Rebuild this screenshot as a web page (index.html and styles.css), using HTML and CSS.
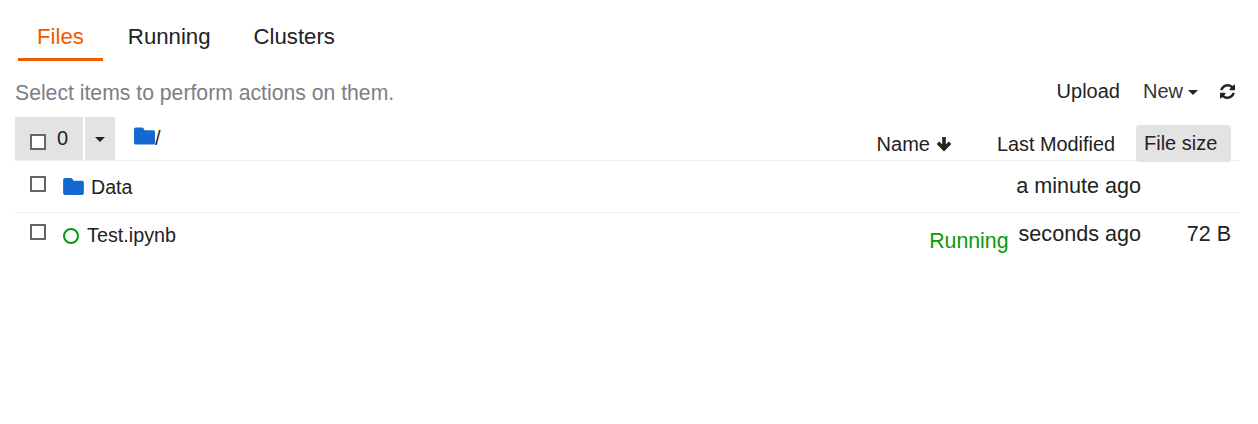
FILE: index.html
```html
<!DOCTYPE html>
<html lang="en">
<head>
<meta charset="utf-8">
<title>Files</title>
<link rel="stylesheet" href="styles.css">
</head>
<body>
<nav class="tabs">
  <a class="tab active">Files</a>
  <a class="tab">Running</a>
  <a class="tab">Clusters</a>
</nav>
<div class="toolbar">
  <span class="hint">Select items to perform actions on them.</span>
  <div class="actions">
    <span class="upload">Upload</span>
    <span class="new">New<i class="caret"></i></span>
    <svg class="refresh" viewBox="0 0 1536 1536" width="15" height="15"><path fill="#222" d="M1511 928q0 5-1 7-64 268-268 434.5T764 1536q-146 0-282.500-55T238 1324l-129 129q-19 19-45 19t-45-19-19-45V960q0-26 19-45t45-19h448q26 0 45 19t19 45-19 45l-137 137q71 66 161 102t187 36q134 0 250-65t186-179q11-17 53-117 8-23 30-23h192q13 0 22.500 9.500t9.500 22.500zm25-800v448q0 26-19 45t-45 19h-448q-26 0-45-19t-19-45 19-45l138-138Q969 256 768 256q-134 0-250 65T332 500q-11 17-53 117-8 23-30 23H50q-13 0-22.500-9.500T18 608v-7q65-268 270-434.500T768 0q146 0 284 55.500T1297 212l130-129q19-19 45-19t45 19 19 45z"/></svg>
  </div>
</div>
<div class="list">
  <div class="head">
    <div class="select-btn"><span class="box"></span><span class="count">0</span></div>
    <div class="drop-btn"><i class="caret"></i></div>
    <div class="crumb">
      <svg class="folder crumb-folder" viewBox="0 0 22 18" width="21" height="18"><path fill="#1469d0" d="M2 0h6q1.500 0 2 1l1 2h9q2 0 2 2v11q0 2-2 2H2q-2 0-2-2V2q0-2 2-2z"/></svg><span>/</span>
    </div>
    <div class="columns">
      <span class="col-name">Name <svg class="arrow" viewBox="0 0 16 15" width="16" height="15"><path fill="#222" d="M6.200 0h3.600v7.500l3-3L15.300 7 8 14.500.7 7l2.500-2.500 3 3z"/></svg></span>
      <span class="col-mod">Last Modified</span>
      <span class="col-size">File size</span>
    </div>
  </div>
  <div class="row row-data">
    <span class="box"></span>
    <svg class="folder" viewBox="0 0 22 18" width="21" height="17"><path fill="#1469d0" d="M2 0h6q1.500 0 2 1l1 2h9q2 0 2 2v11q0 2-2 2H2q-2 0-2-2V2q0-2 2-2z"/></svg>
    <span class="name">Data</span>
    <span class="time">a minute ago</span>
  </div>
  <div class="row row-test">
    <span class="box"></span>
    <span class="ring"></span>
    <span class="name">Test.ipynb</span>
    <span class="status">Running</span>
    <span class="time">seconds ago</span>
    <span class="size">72 B</span>
  </div>
</div>
</body>
</html>
```
FILE: styles.css
```css
* { box-sizing: border-box; }
body {
  margin: 0;
  padding: 0 18px 0 15px;
  font-family: "Liberation Sans", Arial, sans-serif;
  font-size: 20px;
  color: #222;
  background: #fff;
}
.tabs {
  display: flex;
  gap: 2px;
  padding: 13px 0 0 3px;
  height: 61px;
}
.tab {
  height: 48px;
  padding: 10px 19px 0;
  font-size: 22.200px;
  line-height: 28px;
}
.tab + .tab { padding: 10px 20px 0; margin-left: 1px; }
.tab.active {
  margin-right: 2px;
  color: #f25a00;
  border-bottom: 3px solid #f25a00;
}
.toolbar {
  display: flex;
  justify-content: space-between;
  height: 56px;
  padding-top: 18px;
}
.hint { padding-top: 1px; color: #7b8087; font-size: 21.200px; line-height: 26px; }
.actions { display: flex; align-items: flex-start; padding-right: 5px; line-height: 24px; }
.upload { margin-right: 23px; }
.new { display: flex; align-items: center; color: #333; }
.new .caret { margin-left: 5px; margin-top: 2px; }
.caret {
  display: inline-block;
  border-top: 5px solid #222;
  border-left: 5px solid transparent;
  border-right: 5px solid transparent;
}
.refresh { margin: 5px 0 0 22px; }
.list { width: 1225px; }
.head {
  display: flex;
  height: 44px;
  border-bottom: 1px solid #eee;
}
.select-btn {
  display: flex;
  width: 68px;
  height: 43px;
  padding-left: 15px;
  background: #e3e3e3;
}
.box {
  flex: none;
  width: 16px;
  height: 16px;
  border: 2px solid #666;
  background: #fff;
}
.select-btn .box { margin-top: 17px; }
.count { margin-left: 11px; line-height: 43px; }
.drop-btn {
  display: flex;
  justify-content: center;
  width: 30px;
  height: 43px;
  margin-left: 2px;
  padding-top: 20px;
  background: #e3e3e3;
}
.drop-btn .caret { height: 5px; }
.crumb {
  display: flex;
  margin-left: 19px;
  padding-top: 10px;
  line-height: 22px;
}
.columns {
  display: flex;
  flex: 1;
  justify-content: flex-end;
  padding: 8px 9px 0 0;
}
.col-name { display: flex; align-items: center; gap: 6px; height: 38px; line-height: 38px; }
.col-mod { margin-left: 45px; height: 38px; font-size: 19.850px; line-height: 38px; }
.col-size {
  width: 95px;
  height: 37px;
  margin-left: 21px;
  padding-left: 8px;
  line-height: 36px;
  background: #e3e3e3;
  border-radius: 3px;
}
.row {
  display: flex;
  align-items: flex-start;
  height: 52px;
  padding-left: 15px;
  border-bottom: 1px solid #eee;
}
.row-test { border-bottom: 0; }
.row-data .box { margin-top: 15px; }
.row-test .box { margin-top: 11px; }
.row-data .folder { margin: 17px 0 0 17px; }
.row-data .name { margin: 14px 0 0 7px; font-size: 19.600px; line-height: 24px; }
.time { font-size: 21.600px; }
.row-data .time { margin: 13px 99px 0 auto; line-height: 24px; }
.ring {
  flex: none;
  width: 16px;
  height: 16px;
  margin: 15px 0 0 17px;
  border: 2px solid #0a9a0a;
  border-radius: 50%;
}
.row-test .name { margin: 10px 0 0 8px; font-size: 19.800px; line-height: 24px; }
.status { margin: 16px 0 0 auto; font-size: 21.300px; color: #0a9a0a; line-height: 24px; }
.row-test .time { margin: 9px 0 0 10px; line-height: 24px; }
.size { width: 99px; padding-right: 9px; margin-top: 9px; font-size: 21.500px; text-align: right; line-height: 24px; }
```
